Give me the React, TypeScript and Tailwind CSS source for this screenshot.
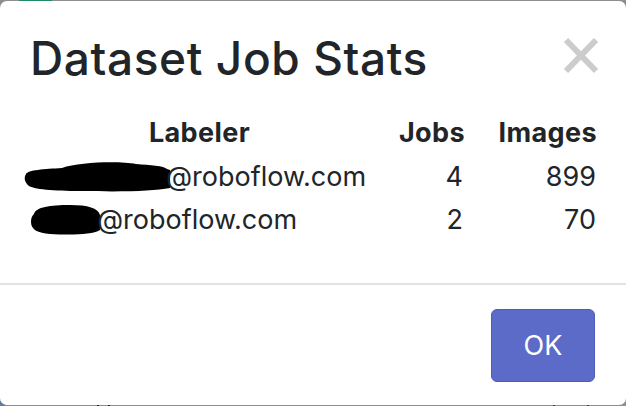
import React from "react";

const font = { fontFamily: "Inter, 'Noto Sans', sans-serif" };

function Blob1() {
  return (
    <svg width="146" height="32" viewBox="0 0 146 32" className="inline-block align-middle -mr-[4px] shrink-0">
      <path
        d="M2 13 C 4 9, 20 8, 38 7 C 55 1, 95 0, 112 3 C 126 4, 140 5, 143 8 L 146 9 L 146 27 C 130 30, 100 31, 60 30 C 35 30, 12 29, 5 25 C 0 21, 0 16, 2 13 Z"
        fill="#000"
      />
    </svg>
  );
}

function Blob2() {
  return (
    <svg width="70" height="32" viewBox="0 0 70 32" className="inline-block align-middle -mr-[3px] shrink-0">
      <path
        d="M4 10 C 6 3, 20 1, 40 1 C 58 1, 68 4, 70 11 L 70 26 C 62 31, 40 31, 20 30 C 8 29, 1 26, 1 18 C 1 14, 2 12, 4 10 Z"
        fill="#000"
      />
    </svg>
  );
}

export default function App() {
  return (
    <div className="relative w-[626px] h-[406px] bg-[#8e8e8e] pt-[1px] pb-[1px] overflow-hidden" style={font}>
      <div className="absolute left-[19px] top-0 w-[33px] h-[1px] bg-[#1f8a66]" />
      <div className="absolute left-0 bottom-0 w-[5px] h-[5px] bg-[#5b7fa0]" />
      <div className="absolute left-[97px] bottom-0 w-[2px] h-[2px] bg-[#222]" />
      <div className="absolute left-[108px] bottom-0 w-[2px] h-[2px] bg-[#222]" />
      <div className="absolute left-[553px] bottom-0 w-[2px] h-[2px] bg-[#444]" />
      <div className="absolute left-[587px] bottom-0 w-[2px] h-[2px] bg-[#444]" />
      <div className="relative h-[404px] bg-white rounded-[7px] flex flex-col text-[#212529]">
        <div className="h-[100px] flex items-start justify-between pl-[30px] pr-[27px] pt-[30px]">
          <h1 className="text-[46px] leading-[55px] font-medium tracking-[0.6px]">Dataset Job Stats</h1>
          <svg width="36" height="37" viewBox="0 0 36 37" className="mt-[6px]">
            <line x1="3" y1="3" x2="33" y2="34" stroke="#cccccc" strokeWidth="6" />
            <line x1="33" y1="3" x2="3" y2="34" stroke="#cccccc" strokeWidth="6" />
          </svg>
        </div>
        <div className="flex-1 pl-[24px] pt-[9px]">
          <div className="grid grid-cols-[351px_90px_132px] text-[27px]">
            <div className="h-[45px] leading-[45px] font-bold text-center tracking-[0.4px]">Labeler</div>
            <div className="h-[45px] leading-[45px] font-bold text-right tracking-[0.4px]">Jobs</div>
            <div className="h-[45px] leading-[45px] font-bold text-right tracking-[0.4px]">Images</div>

            <div className="h-[43px] leading-[43px] flex items-center whitespace-nowrap">
              <Blob1 />
              <span>@roboflow.com</span>
            </div>
            <div className="h-[43px] leading-[43px] text-right pr-[2px]">4</div>
            <div className="h-[43px] leading-[43px] text-right pr-[1px]">899</div>

            <div className="h-[43px] leading-[43px] flex items-center whitespace-nowrap pl-[6px]">
              <Blob2 />
              <span>@roboflow.com</span>
            </div>
            <div className="h-[43px] leading-[43px] text-right pr-[2px]">2</div>
            <div className="h-[43px] leading-[43px] text-right pr-[1px]">70</div>
          </div>
        </div>
        <div className="h-[2px] bg-[#dfe3e8]" />
        <div className="h-[120px] flex items-center justify-end pr-[31px]">
          <button className="w-[104px] h-[73px] rounded-[6px] bg-[#5c6bc8] border border-[#4d5cb8] text-white text-[27px] leading-none">
            OK
          </button>
        </div>
      </div>
    </div>
  );
}
